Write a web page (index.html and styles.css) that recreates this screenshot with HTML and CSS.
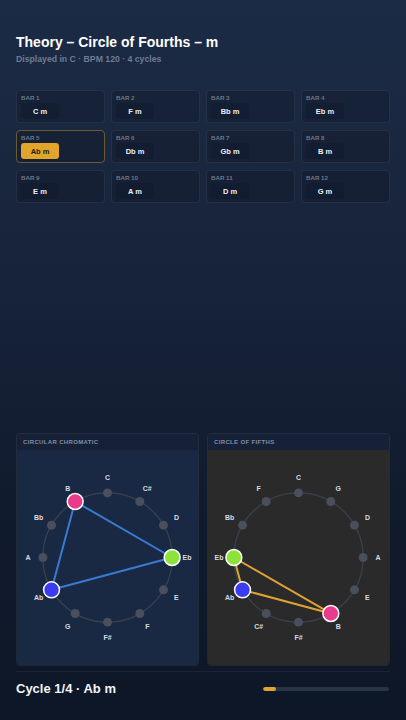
FILE: index.html
```html
<!DOCTYPE html>
<html>
<head>
<meta charset="utf-8">
<link rel="stylesheet" href="styles.css">
</head>
<body>
<div class="page">
  <header class="head">
    <h1 class="title">Theory – Circle of Fourths – m</h1>
    <p class="sub">Displayed in C · BPM 120 · 4 cycles</p>
  </header>

  <section class="bars">
    <div class="bar"><span class="bar-label">BAR 1</span><span class="chip">C m</span></div>
    <div class="bar"><span class="bar-label">BAR 2</span><span class="chip">F m</span></div>
    <div class="bar"><span class="bar-label">BAR 3</span><span class="chip">Bb m</span></div>
    <div class="bar"><span class="bar-label">BAR 4</span><span class="chip">Eb m</span></div>
    <div class="bar active"><span class="bar-label">BAR 5</span><span class="chip">Ab m</span></div>
    <div class="bar"><span class="bar-label">BAR 6</span><span class="chip">Db m</span></div>
    <div class="bar"><span class="bar-label">BAR 7</span><span class="chip">Gb m</span></div>
    <div class="bar"><span class="bar-label">BAR 8</span><span class="chip">B m</span></div>
    <div class="bar"><span class="bar-label">BAR 9</span><span class="chip">E m</span></div>
    <div class="bar"><span class="bar-label">BAR 10</span><span class="chip">A m</span></div>
    <div class="bar"><span class="bar-label">BAR 11</span><span class="chip">D m</span></div>
    <div class="bar"><span class="bar-label">BAR 12</span><span class="chip">G m</span></div>
  </section>

  <div class="spacer"></div>

  <section class="panels">
    <div class="panel chromatic">
      <div class="panel-head">CIRCULAR CHROMATIC</div>
      <div class="panel-body">
        <svg class="wheel" viewBox="-91 -107.5 182 215">
          <circle class="ring" cx="0" cy="0" r="65"/>
          <line class="edge blue" x1="-32.5" y1="-56.29" x2="65" y2="0"/>
          <line class="edge blue" x1="65" y1="0" x2="-56.29" y2="32.5"/>
          <line class="edge blue" x1="-56.29" y1="32.5" x2="-32.5" y2="-56.29"/>
          <circle class="node" cx="0" cy="-65" r="4.5"/>
          <circle class="node" cx="32.5" cy="-56.29" r="4.5"/>
          <circle class="node" cx="56.29" cy="-32.5" r="4.5"/>
          <circle class="node" cx="56.29" cy="32.5" r="4.5"/>
          <circle class="node" cx="32.5" cy="56.29" r="4.5"/>
          <circle class="node" cx="0" cy="65" r="4.5"/>
          <circle class="node" cx="-32.5" cy="56.29" r="4.5"/>
          <circle class="node" cx="-65" cy="0" r="4.5"/>
          <circle class="node" cx="-56.29" cy="-32.5" r="4.5"/>
          <circle class="hot pink" cx="-32.5" cy="-56.29" r="8"/>
          <circle class="hot green" cx="65" cy="0" r="8"/>
          <circle class="hot violet" cx="-56.29" cy="32.5" r="8"/>
          <text class="lbl" x="0" y="-80">C</text>
          <text class="lbl" x="40" y="-69.28">C#</text>
          <text class="lbl" x="69.28" y="-40">D</text>
          <text class="lbl" x="80" y="0">Eb</text>
          <text class="lbl" x="69.28" y="40">E</text>
          <text class="lbl" x="40" y="69.28">F</text>
          <text class="lbl" x="0" y="80">F#</text>
          <text class="lbl" x="-40" y="69.28">G</text>
          <text class="lbl" x="-69.28" y="40">Ab</text>
          <text class="lbl" x="-80" y="0">A</text>
          <text class="lbl" x="-69.28" y="-40">Bb</text>
          <text class="lbl" x="-40" y="-69.28">B</text>
        </svg>
      </div>
    </div>
    <div class="panel fifths">
      <div class="panel-head">CIRCLE OF FIFTHS</div>
      <div class="panel-body">
        <svg class="wheel" viewBox="-91 -107.5 182 215">
          <circle class="ring" cx="0" cy="0" r="65"/>
          <line class="edge gold" x1="-65" y1="0" x2="32.5" y2="56.29"/>
          <line class="edge gold" x1="-56.29" y1="32.5" x2="32.5" y2="56.29"/>
          <line class="edge gold" x1="-65" y1="0" x2="-56.29" y2="32.5"/>
          <circle class="node" cx="0" cy="-65" r="4.5"/>
          <circle class="node" cx="32.5" cy="-56.29" r="4.5"/>
          <circle class="node" cx="56.29" cy="-32.5" r="4.5"/>
          <circle class="node" cx="65" cy="0" r="4.5"/>
          <circle class="node" cx="56.29" cy="32.5" r="4.5"/>
          <circle class="node" cx="0" cy="65" r="4.5"/>
          <circle class="node" cx="-32.5" cy="56.29" r="4.5"/>
          <circle class="node" cx="-56.29" cy="-32.5" r="4.5"/>
          <circle class="node" cx="-32.5" cy="-56.29" r="4.5"/>
          <circle class="hot pink" cx="32.5" cy="56.29" r="8"/>
          <circle class="hot green" cx="-65" cy="0" r="8"/>
          <circle class="hot violet" cx="-56.29" cy="32.5" r="8"/>
          <text class="lbl" x="0" y="-80">C</text>
          <text class="lbl" x="40" y="-69.28">G</text>
          <text class="lbl" x="69.28" y="-40">D</text>
          <text class="lbl" x="80" y="0">A</text>
          <text class="lbl" x="69.28" y="40">E</text>
          <text class="lbl" x="40" y="69.28">B</text>
          <text class="lbl" x="0" y="80">F#</text>
          <text class="lbl" x="-40" y="69.28">C#</text>
          <text class="lbl" x="-69.28" y="40">Ab</text>
          <text class="lbl" x="-80" y="0">Eb</text>
          <text class="lbl" x="-69.28" y="-40">Bb</text>
          <text class="lbl" x="-40" y="-69.28">F</text>
        </svg>
      </div>
    </div>
  </section>

  <footer class="foot">
    <span class="cycle">Cycle 1/4 · Ab m</span>
    <div class="progress"><div class="progress-fill" style="width:10%"></div></div>
  </footer>
</div>
</body>
</html>
```

FILE: styles.css
```css
* { box-sizing: border-box; }
html, body { margin: 0; padding: 0; }
body {
  width: 406px;
  height: 720px;
  overflow: hidden;
  font-family: "Liberation Sans", Arial, sans-serif;
  background: linear-gradient(180deg, #1c2b45 0%, #17243b 35%, #111b2e 70%, #0e1727 100%);
  color: #fff;
}
.page {
  display: flex;
  flex-direction: column;
  height: 720px;
  padding: 34px 16px 0;
}
.title {
  margin: 0;
  font-size: 14px;
  line-height: 17px;
  font-weight: 700;
  color: #ffffff;
}
.sub {
  margin: 3px 0 0;
  font-size: 8.7px;
  line-height: 11px;
  font-weight: 700;
  color: #6f7c92;
}
.bars {
  margin-top: 25px;
  display: grid;
  grid-template-columns: repeat(4, 1fr);
  column-gap: 6px;
  row-gap: 7px;
}
.bar {
  height: 33px;
  display: flex;
  flex-direction: column;
  align-items: flex-start;
  padding: 3px 4px 0;
  border: 1px solid rgba(255, 255, 255, 0.07);
  border-radius: 4px;
  background: rgba(8, 12, 22, 0.2);
}
.bar.active {
  border-color: #6a5a30;
}
.bar-label {
  font-size: 6.2px;
  line-height: 8px;
  font-weight: 700;
  color: #6c7688;
}
.chip {
  margin-top: 1px;
  min-width: 38px;
  height: 16px;
  padding: 0 6px;
  border-radius: 3px;
  display: flex;
  align-items: center;
  justify-content: center;
  font-size: 7.5px;
  font-weight: 700;
  color: #eef0f4;
  background: rgba(14, 22, 44, 0.35);
}
.bar.active .chip {
  background: #e2a52c;
  color: #1c1a12;
}
.spacer { flex: 1; }
.panels {
  display: grid;
  grid-template-columns: 1fr 1fr;
  gap: 8px;
  height: 233px;
}
.panel {
  display: flex;
  flex-direction: column;
  border: 1px solid rgba(255, 255, 255, 0.07);
  border-radius: 4px;
  overflow: hidden;
}
.panel-head {
  height: 16px;
  flex: none;
  padding-left: 6px;
  display: flex;
  align-items: center;
  font-size: 6px;
  font-weight: 700;
  letter-spacing: 0.35px;
  color: #858fa2;
  background: #162036;
}
.panel-body {
  flex: 1;
  display: flex;
}
.chromatic .panel-body { background: #1a2943; }
.fifths .panel-body { background: #2a2a2b; }
.wheel {
  width: 100%;
  height: 100%;
  display: block;
}
.ring {
  fill: none;
  stroke: #3b414e;
  stroke-width: 1.2;
}
.node {
  fill: #494f5c;
}
.edge {
  stroke-width: 2;
  stroke-linecap: round;
}
.edge.blue { stroke: #3a7ad2; }
.edge.gold { stroke: #e0a232; }
.hot {
  stroke: #ffffff;
  stroke-width: 1.5;
}
.pink { fill: #ea3a8c; }
.green { fill: #8de33a; }
.violet { fill: #3b3cf0; }
.lbl {
  font-family: "Liberation Sans", Arial, sans-serif;
  font-size: 7px;
  font-weight: 700;
  fill: #d7dbe3;
  text-anchor: middle;
  dominant-baseline: central;
}
.foot {
  margin-top: 5px;
  border-top: 1px solid rgba(255, 255, 255, 0.06);
  padding: 9px 0 23px;
  display: flex;
  align-items: center;
  justify-content: space-between;
}
.cycle {
  font-size: 13px;
  line-height: 16px;
  font-weight: 700;
  color: #f2f4f8;
}
.progress {
  width: 126px;
  height: 4px;
  margin-right: 1px;
  border-radius: 2px;
  background: #2a3447;
  overflow: hidden;
}
.progress-fill {
  height: 100%;
  border-radius: 2px;
  background: #e2a52c;
}
```
